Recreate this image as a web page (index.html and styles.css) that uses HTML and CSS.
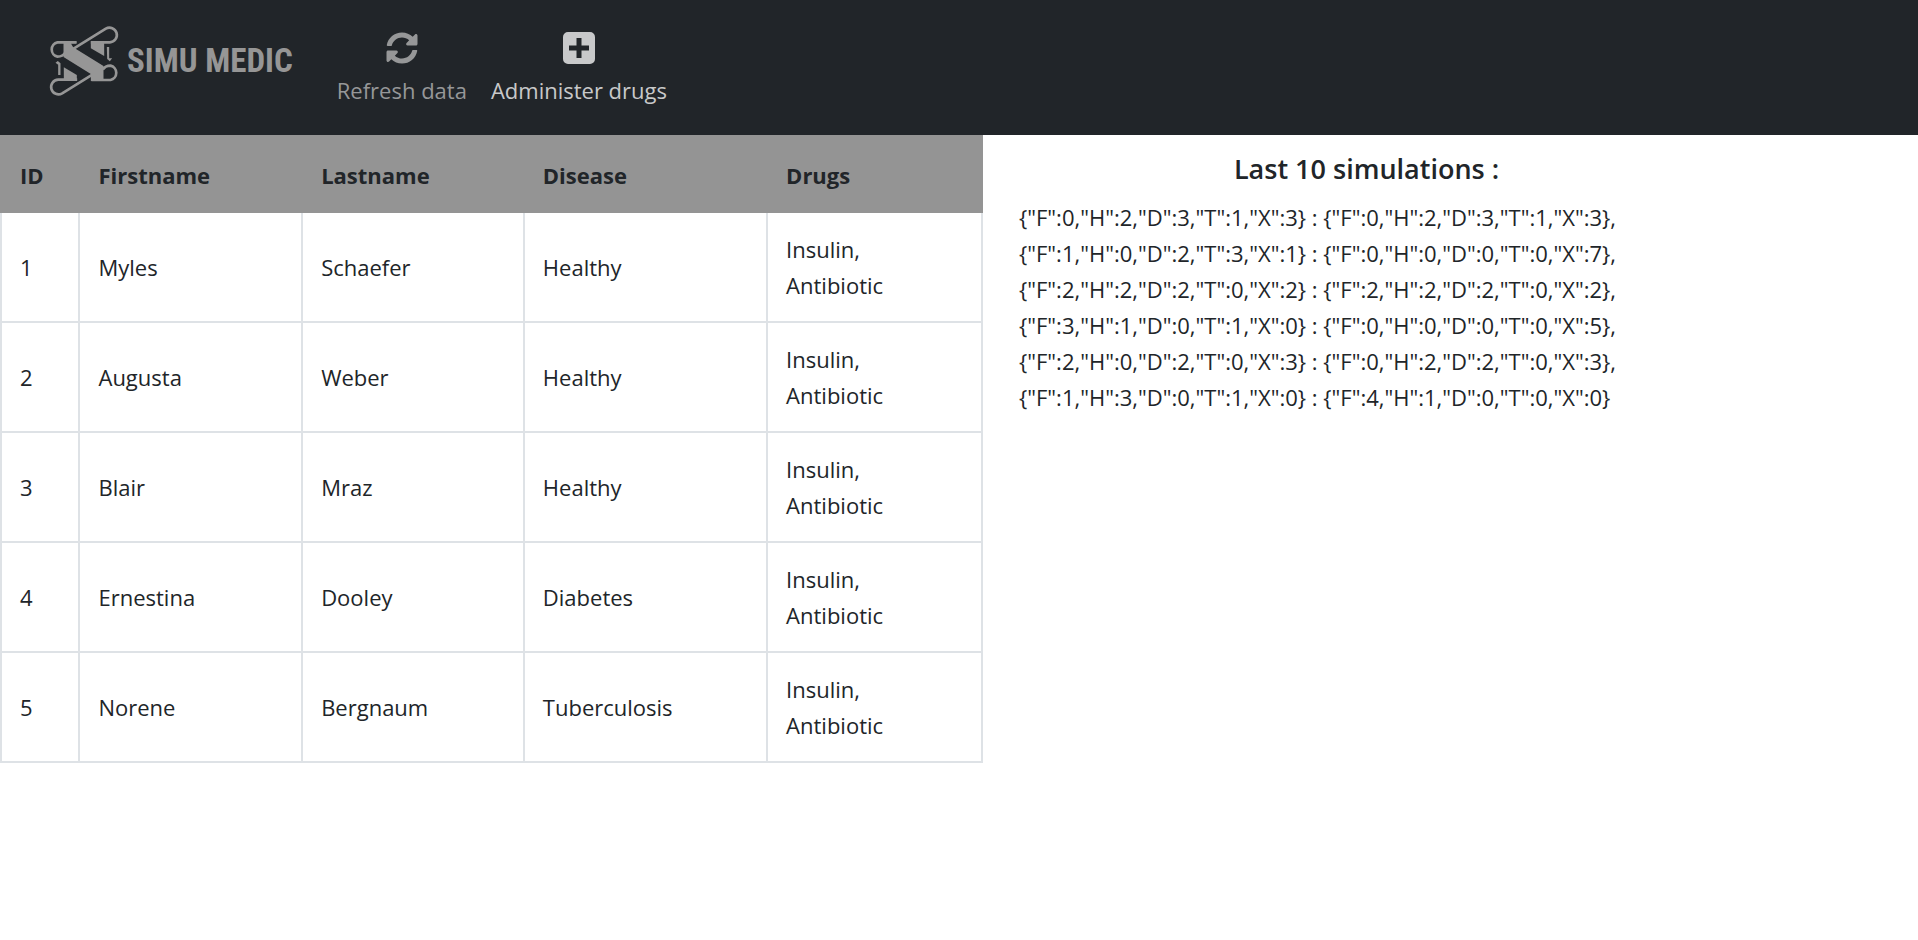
FILE: index.html
```html
<!DOCTYPE html>
<html lang="en">
<head>
<meta charset="utf-8">
<title>Simu Medic</title>
<link rel="stylesheet" href="styles.css">
</head>
<body>
<header class="navbar">
  <a class="brand" href="#">
    <svg class="brand-mark" viewBox="57 45 213 216" aria-hidden="true">
      <g fill="none" stroke="currentColor" stroke-width="8">
        <path d="M124 121 L229 56 A22 22 0 1 1 241 97 H184"/>
        <path d="M141 97 H84 A22 22 0 0 0 84 140 Q100 140 107 128"/>
        <path d="M203 185 L98 250 A22 22 0 1 1 86 209 H143"/>
        <path d="M186 210 H243 A22 22 0 0 0 243 167 Q227 167 220 179"/>
      </g>
      <g fill="currentColor">
        <path d="M102 94 H141 V100 H124 L131 112 L222 168 V213 H184 V192 L102 141 Z"/>
        <path d="M184 94 H224 V138 L184 115 Z"/>
        <path d="M103 172 L142 195 V213 H103 Z"/>
        <path d="M232 111 H239 V145 H248 L241 154 L233 147 Z"/>
        <path d="M78 158 L85 153 L93 160 V195 H86 V164 Z"/>
      </g>
    </svg>
    <span class="brand-name">SIMU MEDIC</span>
  </a>
  <nav class="actions">
    <button class="action action-muted" type="button">
      <svg class="icon" viewBox="0 0 512 512" aria-hidden="true"><path fill="currentColor" d="M370.72 133.28C339.458 104.008 298.888 87.962 255.848 88c-77.458.068-144.328 53.178-162.791 126.85-1.344 5.363-6.122 9.15-11.651 9.15H24.103c-7.498 0-13.194-6.807-11.807-14.176C33.933 94.924 134.813 8 256 8c66.448 0 126.791 26.136 171.315 68.685L463.03 40.97C478.149 25.851 504 36.559 504 57.941V192c0 13.255-10.745 24-24 24H345.941c-21.382 0-32.09-25.851-16.971-40.971l41.75-41.749zM32 296h134.059c21.382 0 32.09 25.851 16.971 40.971l-41.75 41.75c31.262 29.273 71.835 45.319 114.876 45.28 77.418-.07 144.315-53.144 162.787-126.849 1.344-5.363 6.122-9.15 11.651-9.15h57.304c7.498 0 13.194 6.807 11.807 14.176C478.067 417.076 377.187 504 256 504c-66.448 0-126.791-26.136-171.315-68.685L48.97 471.03C33.851 486.149 8 475.441 8 454.059V320c0-13.255 10.745-24 24-24z"/></svg>
      <span>Refresh data</span>
    </button>
    <button class="action" type="button">
      <svg class="icon" viewBox="0 0 32 32" aria-hidden="true"><path fill="currentColor" fill-rule="evenodd" d="M5 0H27A5 5 0 0 1 32 5V27A5 5 0 0 1 27 32H5A5 5 0 0 1 0 27V5A5 5 0 0 1 5 0ZM13.500 6V13.500H6V18.500H13.500V26H18.500V18.500H26V13.500H18.500V6Z"/></svg>
      <span>Administer drugs</span>
    </button>
  </nav>
</header>
<main class="content">
  <table class="patients">
    <thead>
      <tr><th class="col-id">ID</th><th class="col-first">Firstname</th><th class="col-last">Lastname</th><th class="col-disease">Disease</th><th>Drugs</th></tr>
    </thead>
    <tbody>
      <tr><td>1</td><td>Myles</td><td>Schaefer</td><td>Healthy</td><td>Insulin,<br>Antibiotic</td></tr>
      <tr><td>2</td><td>Augusta</td><td>Weber</td><td>Healthy</td><td>Insulin,<br>Antibiotic</td></tr>
      <tr><td>3</td><td>Blair</td><td>Mraz</td><td>Healthy</td><td>Insulin,<br>Antibiotic</td></tr>
      <tr><td>4</td><td>Ernestina</td><td>Dooley</td><td>Diabetes</td><td>Insulin,<br>Antibiotic</td></tr>
      <tr><td>5</td><td>Norene</td><td>Bergnaum</td><td>Tuberculosis</td><td>Insulin,<br>Antibiotic</td></tr>
    </tbody>
  </table>
  <section class="history">
    <h2 class="history-title">Last 10 simulations :</h2>
    <ul class="history-list">
      <li>{"F":0,"H":2,"D":3,"T":1,"X":3} : {"F":0,"H":2,"D":3,"T":1,"X":3},</li>
      <li>{"F":1,"H":0,"D":2,"T":3,"X":1} : {"F":0,"H":0,"D":0,"T":0,"X":7},</li>
      <li>{"F":2,"H":2,"D":2,"T":0,"X":2} : {"F":2,"H":2,"D":2,"T":0,"X":2},</li>
      <li>{"F":3,"H":1,"D":0,"T":1,"X":0} : {"F":0,"H":0,"D":0,"T":0,"X":5},</li>
      <li>{"F":2,"H":0,"D":2,"T":0,"X":3} : {"F":0,"H":2,"D":2,"T":0,"X":3},</li>
      <li>{"F":1,"H":3,"D":0,"T":1,"X":0} : {"F":4,"H":1,"D":0,"T":0,"X":0}</li>
    </ul>
  </section>
</main>
</body>
</html>
```
FILE: styles.css
```css
* {
  box-sizing: border-box;
}

body {
  margin: 0;
  background: #fff;
  color: #212529;
  font-family: "Segoe UI", "Open Sans", "Noto Sans", sans-serif;
  font-size: 22px;
  line-height: 36px;
}

.navbar {
  display: flex;
  align-items: flex-start;
  gap: 32px;
  padding: 25px 48px 27px;
  background: #212529;
}

.brand {
  display: flex;
  align-items: center;
  gap: 7px;
  color: #969696;
  text-decoration: none;
}

.brand-mark {
  width: 72px;
  height: 72px;
}

.brand-name {
  font-family: "Roboto Condensed", "Open Sans Condensed", "Noto Sans Condensed", Roboto, sans-serif;
  font-size: 33px;
  font-weight: 700;
  white-space: nowrap;
}

.actions {
  display: flex;
}

.action {
  display: flex;
  flex-direction: column;
  align-items: center;
  gap: 8px;
  padding: 7px 12px 0;
  border: 0;
  background: none;
  color: #c8c9ca;
  font: inherit;
  white-space: nowrap;
}

.action-muted {
  color: #969798;
}

.icon {
  width: 32px;
  height: 32px;
}

.content {
  display: flex;
  align-items: flex-start;
}

.patients {
  width: 51.25%;
  table-layout: fixed;
  border-collapse: collapse;
}

.patients th,
.patients td {
  padding: 18px;
  text-align: left;
  vertical-align: middle;
}

.patients th {
  padding-top: 22px;
  border: 2px solid #949494;
  border-top: 0;
  background: #949494;
  font-weight: 700;
}

.patients td {
  border: 2px solid #dee2e6;
}

.patients .col-id {
  width: 8%;
}

.patients .col-first {
  width: 22.7%;
}

.patients .col-last {
  width: 22.6%;
}

.patients .col-disease {
  width: 24.8%;
}

.history {
  width: 40%;
  padding: 16px 36px;
}

.history-title {
  margin: 0 0 12px;
  font-size: 27px;
  font-weight: 600;
  line-height: 36px;
  text-align: center;
}

.history-list {
  margin: 0;
  padding: 0;
  list-style: none;
  white-space: nowrap;
}
```
